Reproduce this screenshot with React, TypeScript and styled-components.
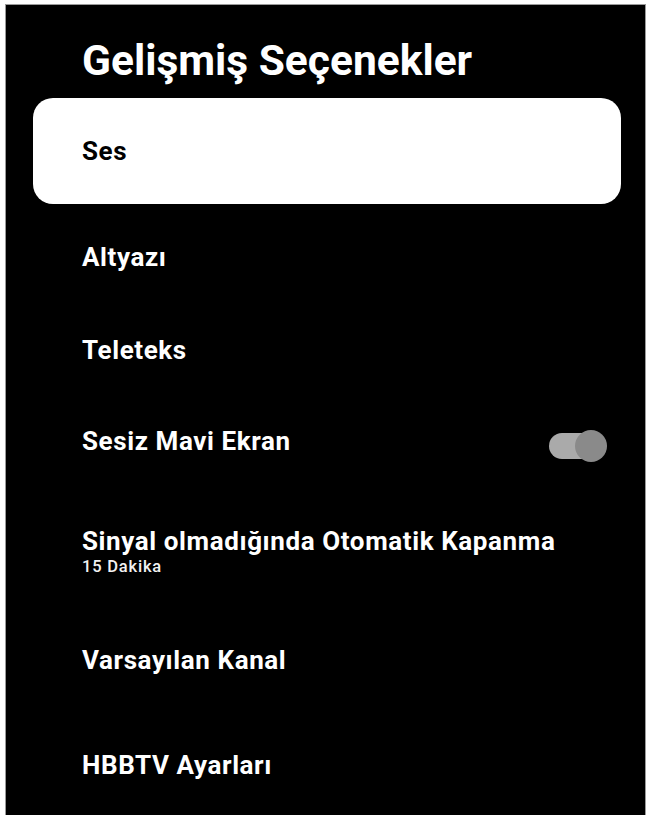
import React from "react";
import styled, { createGlobalStyle } from "styled-components";

const Global = createGlobalStyle`
  html, body { margin: 0; padding: 0; background: #ffffff; }
  body { font-family: Roboto, "Noto Sans", "Liberation Sans", sans-serif; }
  #root { width: 650px; height: 815px; overflow: hidden; }
`;

const Screen = styled.div`
  box-sizing: border-box;
  margin: 4px 4px 0 5px;
  height: 811px;
  background: #000;
  border: 1px solid #9a9a9a;
  border-bottom: none;
  display: flex;
  flex-direction: column;
  overflow: hidden;
`;

const Title = styled.h1`
  margin: 0;
  padding: 32px 0 0 76px;
  height: 93px;
  flex: none;
  box-sizing: border-box;
  font-family: Roboto, "Noto Sans", sans-serif;
  font-weight: 700;
  font-size: 42.5px;
  line-height: 48px;
  color: #fff;
  letter-spacing: 0;
`;

const List = styled.div`
  display: flex;
  flex-direction: column;
`;

const Row = styled.div<{ $h: number; $selected?: boolean }>`
  box-sizing: border-box;
  flex: none;
  height: ${(p) => p.$h}px;
  margin: 0 ${(p) => (p.$selected ? "24px" : "0")} 0 ${(p) => (p.$selected ? "27px" : "0")};
  padding: 0 ${(p) => (p.$selected ? "12px" : "36px")} 0 ${(p) => (p.$selected ? "49px" : "76px")};
  display: flex;
  align-items: center;
  justify-content: space-between;
  background: ${(p) => (p.$selected ? "#fff" : "transparent")};
  border-radius: ${(p) => (p.$selected ? "20px" : "0")};
  color: ${(p) => (p.$selected ? "#000" : "#fff")};
`;

const Texts = styled.div`
  display: flex;
  flex-direction: column;
`;

const Label = styled.div`
  font-family: Roboto, "Noto Sans", sans-serif;
  font-weight: 700;
  font-size: 26px;
  line-height: 28px;
  letter-spacing: 0.6px;
`;

const Sub = styled.div`
  font-family: Roboto, "Noto Sans", sans-serif;
  font-weight: 500;
  font-size: 16.5px;
  line-height: 17px;
  letter-spacing: 0.8px;
  color: #f2f2f2;
  margin-top: 3px;
`;

const Toggle = styled.div`
  position: relative;
  width: 58px;
  height: 32px;
  display: flex;
  align-items: center;
  margin: 10px 2px 0 0;
`;

const Track = styled.div`
  width: 48px;
  height: 26px;
  border-radius: 13px;
  background: #aaaaaa;
`;

const Knob = styled.div`
  position: absolute;
  right: 0;
  top: 0;
  width: 32px;
  height: 32px;
  border-radius: 50%;
  background: #8a8a8a;
`;

type Item = { label: string; sub?: string; h: number; toggle?: boolean; selected?: boolean };

const items: Item[] = [
  { label: "Ses", h: 106, selected: true },
  { label: "Altyazı", h: 106 },
  { label: "Teleteks", h: 80 },
  { label: "Sesiz Mavi Ekran", h: 102, toggle: true },
  { label: "Sinyal olmadığında Otomatik Kapanma", sub: "15 Dakika", h: 118 },
  { label: "Varsayılan Kanal", h: 100 },
  { label: "HBBTV Ayarları", h: 110 },
];

export default function App() {
  return (
    <>
      <Global />
      <Screen>
        <Title>Gelişmiş Seçenekler</Title>
        <List>
          {items.map((it) => (
            <Row key={it.label} $h={it.h} $selected={it.selected}>
              <Texts>
                <Label>{it.label}</Label>
                {it.sub && <Sub>{it.sub}</Sub>}
              </Texts>
              {it.toggle && (
                <Toggle>
                  <Track />
                  <Knob />
                </Toggle>
              )}
            </Row>
          ))}
        </List>
      </Screen>
    </>
  );
}
